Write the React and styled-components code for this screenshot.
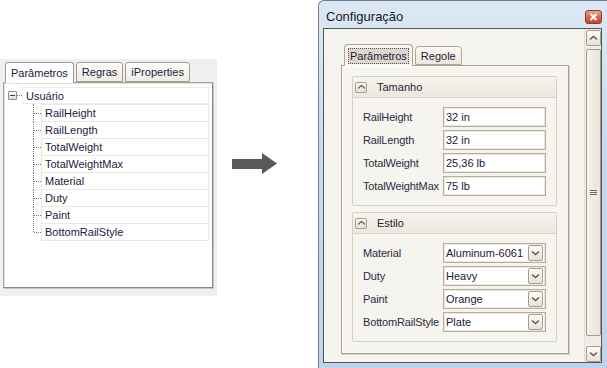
import styled, { createGlobalStyle } from 'styled-components';

const GlobalStyle = createGlobalStyle`
  html, body { margin: 0; padding: 0; background: #fff; }
  body { font-family: "Liberation Sans", Arial, sans-serif; font-size: 11px; color: #22223a; }
`;

const Page = styled.div`
  display: flex;
  align-items: flex-start;
  width: 607px;
  height: 368px;
  overflow: hidden;
  background: #fff;
`;

/* ---------- old dialog (left) ---------- */

const OldDialog = styled.div`
  margin-top: 59px;
  width: 217px;
  height: 237px;
  box-sizing: border-box;
  padding: 3px 0 0 3px;
  background: #efefef;
  display: flex;
  flex-direction: column;
`;

const OldTabStrip = styled.div`
  display: flex;
  align-items: flex-start;
  gap: 2px;
  padding-left: 2px;
  height: 20px;
  position: relative;
  z-index: 1;
`;

const OldTab = styled.div`
  height: ${p => (p.$active ? 21 : 20)}px;
  box-sizing: border-box;
  padding: 0 5px;
  border: 1px solid #a39b8e;
  border-bottom: ${p => (p.$active ? 'none' : '1px solid #a39b8e')};
  border-radius: 3px 3px 0 0;
  background: ${p => (p.$active ? '#fff' : 'linear-gradient(#fdfcfa, #eeebe3)')};
  display: flex;
  align-items: center;
  color: #1b1b3a;
`;

const TreePanel = styled.div`
  width: 210px;
  height: 206px;
  box-sizing: border-box;
  border: 1px solid #aaa296;
  border-right-color: #8f877b;
  border-bottom-color: #8f877b;
  background: #fff;
  box-shadow: inset 1px 1px 0 #e4e0d8, 1px 1px 0 #c9c3b8;
  padding: 4px 3px 0 4px;
`;

const TreeRoot = styled.div`
  display: flex;
  align-items: center;
  height: 17px;
`;

const Expander = styled.span`
  position: relative;
  width: 9px;
  height: 9px;
  box-sizing: border-box;
  border: 1px solid #8e8e8e;
  border-radius: 1px;
  background: linear-gradient(#fff, #dedbd3);
  &::after {
    content: '';
    position: absolute;
    left: 1px;
    top: 3px;
    width: 5px;
    height: 1px;
    background: #3c3c3c;
  }
`;

const Connector = styled.span`
  width: 5px;
  border-top: 1px dotted #777;
`;

const RootLabel = styled.div`
  flex: 1;
  height: 17px;
  box-sizing: border-box;
  border: 1px solid #efece5;
  padding-left: 3px;
  display: flex;
  align-items: center;
  color: #1b1b3a;
`;

const TreeChildren = styled.div`
  padding-left: 25px;
  padding-top: 0;
`;

const TreeItem = styled.div`
  position: relative;
  margin-left: 8px;
  width: 168px;
  height: 18px;
  margin-bottom: -1px;
  box-sizing: border-box;
  border: 1px solid #ebe8e0;
  padding-left: 3px;
  display: flex;
  align-items: center;
  color: #1b1b3a;
  &::before {
    content: '';
    position: absolute;
    left: -9px;
    top: -1px;
    height: ${p => (p.$last ? '9px' : '18px')};
    border-left: 1px dotted #777;
  }
  &::after {
    content: '';
    position: absolute;
    left: -8px;
    top: 8px;
    width: 7px;
    border-top: 1px dotted #777;
  }
`;

/* ---------- arrow ---------- */

const ArrowMark = styled.svg`
  margin-left: 15px;
  margin-top: 153px;
  flex: none;
`;

/* ---------- new window (right) ---------- */

const Window = styled.div`
  margin-left: 41px;
  width: 289px;
  height: 368px;
  flex: none;
  box-sizing: border-box;
  border-top: 1px solid #6f7d8e;
  border-left: 1px solid #6f7d8e;
  border-radius: 6px 0 0 0;
  background: linear-gradient(#dde8f5, #c9daee 40%, #bfd4ec);
  display: flex;
  flex-direction: column;
`;

const TitleBar = styled.div`
  height: 27px;
  box-sizing: border-box;
  padding: 4px 5px 0 7px;
  display: flex;
  align-items: center;
  font-size: 13px;
  color: #1a1a1a;
`;

const CloseButton = styled.div`
  margin-left: auto;
  width: 17px;
  height: 14px;
  box-sizing: border-box;
  border: 1px solid #8f3b2c;
  border-radius: 3px;
  background: linear-gradient(#eaa493, #d86a50 50%, #c4442a);
  display: flex;
  align-items: center;
  justify-content: center;
`;

const Client = styled.div`
  margin: 0 5px 5px 4px;
  height: 335px;
  box-sizing: border-box;
  border: 1px solid #50545b;
  background: #f6f4ef;
  display: flex;
`;

const Content = styled.div`
  flex: 1;
  padding: 15px 0 0 17px;
`;

const TabStrip = styled.div`
  display: flex;
  align-items: flex-end;
  gap: 2px;
  padding-left: 3px;
  height: 21px;
  position: relative;
  z-index: 1;
`;

const Tab = styled.div`
  height: ${p => (p.$active ? 22 : 19)}px;
  margin-bottom: ${p => (p.$active ? -1 : 0)}px;
  box-sizing: border-box;
  padding: 0 ${p => (p.$active ? 3 : 5)}px;
  border: 1px solid #b1a692;
  border-bottom: ${p => (p.$active ? 'none' : '1px solid #b1a692')};
  border-radius: 4px 4px 0 0;
  background: ${p => (p.$active ? '#f7f5f0' : 'linear-gradient(#fbfaf6, #ebe7dd)')};
  display: flex;
  align-items: center;
  color: #1c1c34;
`;

const FocusText = styled.span`
  padding: 1px 1px;
  border: 1px dotted #555;
  background: #dcd8cf;
`;

const TabPanel = styled.div`
  width: 228px;
  height: 289px;
  box-sizing: border-box;
  border: 1px solid #a99e8b;
  box-shadow: 1px 1px 0 #d6d0c4, inset 1px 1px 0 #fff;
  background: #f7f5f0;
  padding: 10px 0 0 10px;
  display: flex;
  flex-direction: column;
  gap: 6px;
`;

const Group = styled.div`
  width: 205px;
  box-sizing: border-box;
  border: 1px solid #d6d0c3;
  border-radius: 2px;
  background: #f6f4ef;
`;

const GroupHeader = styled.div`
  height: 20px;
  border-bottom: 1px solid #ddd7cb;
  background: linear-gradient(#f6f4ef, #ebe7dd);
  display: flex;
  align-items: center;
  padding-left: 2px;
  gap: 10px;
  color: #1f1f38;
`;

const SmallButton = styled.span`
  width: ${p => p.$w}px;
  height: ${p => p.$h}px;
  box-sizing: border-box;
  border: 1px solid #a89d8b;
  border-radius: 2px;
  background: linear-gradient(#fdfcfa, #e6e1d6);
  display: flex;
  align-items: center;
  justify-content: center;
  flex: none;
`;

const GroupBody = styled.div`
  padding: 9px 10px;
  display: flex;
  flex-direction: column;
  gap: 3px;
`;

const Row = styled.div`
  display: flex;
  align-items: center;
  height: 20px;
`;

const Label = styled.span`
  width: 80px;
  flex: none;
  white-space: nowrap;
  color: #2a2a40;
  letter-spacing: -0.15px;
`;

const Field = styled.div`
  width: 103px;
  height: 20px;
  box-sizing: border-box;
  border: 1px solid #b8ad9b;
  box-shadow: inset 0 0 0 1px #ece7de;
  background: #fff;
  padding: 0 2px 0 2px;
  display: flex;
  align-items: center;
  justify-content: space-between;
  color: #1a1a2e;
`;

const ScrollBar = styled.div`
  width: 17px;
  flex: none;
  box-sizing: border-box;
  padding: 1px 1px 0 1px;
  border-left: 1px solid #e4e0d6;
  background: #efede6;
  display: flex;
  flex-direction: column;
  align-items: center;
`;

const Thumb = styled.div`
  margin-top: 3px;
  width: 15px;
  height: 287px;
  box-sizing: border-box;
  border: 1px solid #a59a88;
  border-radius: 2px;
  background: linear-gradient(90deg, #f4f2ec, #e9e5da);
  display: flex;
  align-items: center;
  justify-content: center;
`;

const TrackRest = styled.div`
  flex: 1;
`;

const Chevron = ({ down, color = '#5b5750' }) => (
  <svg width="9" height="6" viewBox="0 0 9 6">
    <path
      d={down ? 'M1 1.5 L4.5 4.5 L8 1.5' : 'M1 4.5 L4.5 1.5 L8 4.5'}
      fill="none"
      stroke={color}
      strokeWidth="1.4"
    />
  </svg>
);

const Grip = () => (
  <svg width="7" height="6" viewBox="0 0 7 6">
    <path d="M0 0.5H7M0 2.5H7M0 4.5H7" stroke="#6d675d" strokeWidth="1" />
  </svg>
);

const treeItems = [
  'RailHeight', 'RailLength', 'TotalWeight', 'TotalWeightMax',
  'Material', 'Duty', 'Paint', 'BottomRailStyle',
];

const sizeRows = [
  ['RailHeight', '32 in'],
  ['RailLength', '32 in'],
  ['TotalWeight', '25,36 lb'],
  ['TotalWeightMax', '75 lb'],
];

const styleRows = [
  ['Material', 'Aluminum-6061'],
  ['Duty', 'Heavy'],
  ['Paint', 'Orange'],
  ['BottomRailStyle', 'Plate'],
];

function ParamGroup({ title, rows, combo }) {
  return (
    <Group>
      <GroupHeader>
        <SmallButton $w={12} $h={11}>
          <Chevron color="#6a655c" />
        </SmallButton>
        {title}
      </GroupHeader>
      <GroupBody>
        {rows.map(([name, value]) => (
          <Row key={name}>
            <Label>{name}</Label>
            <Field>
              {value}
              {combo && (
                <SmallButton $w={15} $h={16}>
                  <Chevron down />
                </SmallButton>
              )}
            </Field>
          </Row>
        ))}
      </GroupBody>
    </Group>
  );
}

export default function App() {
  return (
    <Page>
      <GlobalStyle />

      <OldDialog>
        <OldTabStrip>
          <OldTab $active>Parâmetros</OldTab>
          <OldTab>Regras</OldTab>
          <OldTab>iProperties</OldTab>
        </OldTabStrip>
        <TreePanel>
          <TreeRoot>
            <Expander />
            <Connector />
            <RootLabel>Usuário</RootLabel>
          </TreeRoot>
          <TreeChildren>
            {treeItems.map((item, i) => (
              <TreeItem key={item} $last={i === treeItems.length - 1}>
                {item}
              </TreeItem>
            ))}
          </TreeChildren>
        </TreePanel>
      </OldDialog>

      <ArrowMark width="45" height="21" viewBox="0 0 45 21">
        <polygon points="0,6 30,6 30,0 45,10.5 30,21 30,16 0,16" fill="#59595b" />
      </ArrowMark>

      <Window>
        <TitleBar>
          Configuração
          <CloseButton>
            <svg width="9" height="8" viewBox="0 0 9 8">
              <path d="M1.5 1 L7.5 7 M7.5 1 L1.5 7" stroke="#fff" strokeWidth="2" />
            </svg>
          </CloseButton>
        </TitleBar>
        <Client>
          <Content>
            <TabStrip>
              <Tab $active>
                <FocusText>Parâmetros</FocusText>
              </Tab>
              <Tab>Regole</Tab>
            </TabStrip>
            <TabPanel>
              <ParamGroup title="Tamanho" rows={sizeRows} />
              <ParamGroup title="Estilo" rows={styleRows} combo />
            </TabPanel>
          </Content>
          <ScrollBar>
            <SmallButton $w={15} $h={16}>
              <Chevron />
            </SmallButton>
            <Thumb>
              <Grip />
            </Thumb>
            <TrackRest />
            <SmallButton $w={15} $h={16}>
              <Chevron down />
            </SmallButton>
          </ScrollBar>
        </Client>
      </Window>
    </Page>
  );
}
